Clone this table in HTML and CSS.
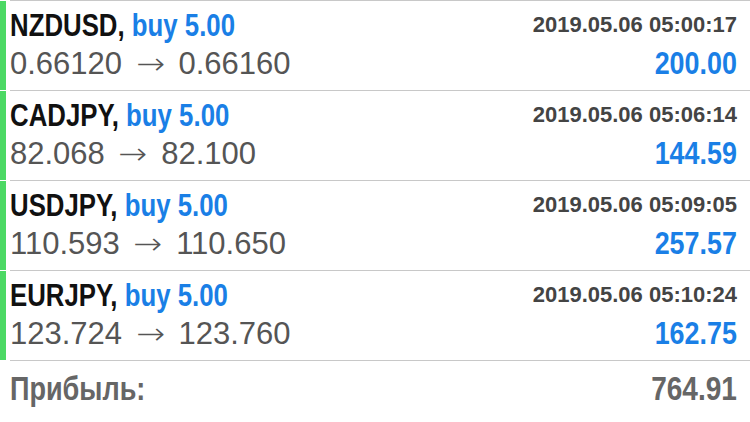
FILE: index.html
```html
<!DOCTYPE html>
<html>
<head>
<meta charset="utf-8">
<link rel="stylesheet" href="styles.css">
</head>
<body>
<div class="list">
  <div class="topline"></div>
  <div class="row">
    <div class="bar"></div>
    <div class="content">
      <div class="left">
        <div class="l1"><span class="sq"><span class="sym">NZDUSD,</span> <span class="act">buy 5.00</span></span></div>
        <div class="l2">0.66120 <span class="arr">→</span> 0.66160</div>
      </div>
      <div class="right">
        <div class="l1"><span class="date">2019.05.06 05:00:17</span></div>
        <div class="l2"><span class="amt">200.00</span></div>
      </div>
    </div>
  </div>
  <div class="row">
    <div class="bar"></div>
    <div class="content">
      <div class="left">
        <div class="l1"><span class="sq"><span class="sym">CADJPY,</span> <span class="act">buy 5.00</span></span></div>
        <div class="l2">82.068 <span class="arr">→</span> 82.100</div>
      </div>
      <div class="right">
        <div class="l1"><span class="date">2019.05.06 05:06:14</span></div>
        <div class="l2"><span class="amt">144.59</span></div>
      </div>
    </div>
  </div>
  <div class="row">
    <div class="bar"></div>
    <div class="content">
      <div class="left">
        <div class="l1"><span class="sq"><span class="sym">USDJPY,</span> <span class="act">buy 5.00</span></span></div>
        <div class="l2">110.593 <span class="arr">→</span> 110.650</div>
      </div>
      <div class="right">
        <div class="l1"><span class="date">2019.05.06 05:09:05</span></div>
        <div class="l2"><span class="amt">257.57</span></div>
      </div>
    </div>
  </div>
  <div class="row">
    <div class="bar"></div>
    <div class="content">
      <div class="left">
        <div class="l1"><span class="sq"><span class="sym">EURJPY,</span> <span class="act">buy 5.00</span></span></div>
        <div class="l2">123.724 <span class="arr">→</span> 123.760</div>
      </div>
      <div class="right">
        <div class="l1"><span class="date">2019.05.06 05:10:24</span></div>
        <div class="l2"><span class="amt">162.75</span></div>
      </div>
    </div>
  </div>
  <div class="footer">
    <span class="flabel">Прибыль:</span>
    <span class="ftotal">764.91</span>
  </div>
</div>
</body>
</html>
```
FILE: styles.css
```css
html, body {
  margin: 0;
  padding: 0;
  background: #ffffff;
}
body {
  font-family: "Liberation Sans", Arial, sans-serif;
  width: 750px;
  height: 422px;
  overflow: hidden;
}
.topline {
  margin-left: 10px;
  height: 1px;
  background: #c8c8c8;
}
.row {
  display: flex;
  height: 90px;
}
.bar {
  width: 6px;
  background: #4cd964;
  margin-bottom: 1px;
}
.content {
  flex: 1;
  margin-left: 4px;
  padding-right: 13px;
  border-bottom: 1px solid #c8c8c8;
  display: flex;
  justify-content: space-between;
  padding-top: 5px;
  box-sizing: border-box;
}
.left, .right {
  display: flex;
  flex-direction: column;
}
.right {
  align-items: flex-end;
}
.l1 {
  height: 38px;
  line-height: 38px;
  white-space: nowrap;
}
.l2 {
  height: 39px;
  line-height: 39px;
  white-space: nowrap;
}
.sq {
  display: inline-block;
  font-weight: bold;
  font-size: 32px;
  transform: scaleX(0.806);
  transform-origin: left center;
}
.sym {
  color: #111111;
}
.act {
  color: #1a7fe6;
}
.left .l2 {
  font-size: 31px;
  color: #555555;
}
.arr {
  display: inline-block;
  font-family: "DejaVu Sans", sans-serif;
  font-weight: 200;
  font-size: 30px;
  margin: 0 7px;
  transform: scaleX(1.15);
}
.date {
  display: inline-block;
  font-weight: bold;
  font-size: 22px;
  color: #444444;
}
.amt {
  display: inline-block;
  font-weight: bold;
  font-size: 32px;
  color: #1a7fe6;
  transform: scaleX(0.84);
  transform-origin: right center;
}
.footer {
  display: flex;
  justify-content: space-between;
  align-items: center;
  height: 56px;
  padding: 0 13px 0 10px;
}
.flabel, .ftotal {
  display: inline-block;
  font-weight: bold;
  font-size: 33px;
  color: #666666;
}
.flabel {
  transform: scaleX(0.82);
  transform-origin: left center;
}
.ftotal {
  transform: scaleX(0.85);
  transform-origin: right center;
}
```
